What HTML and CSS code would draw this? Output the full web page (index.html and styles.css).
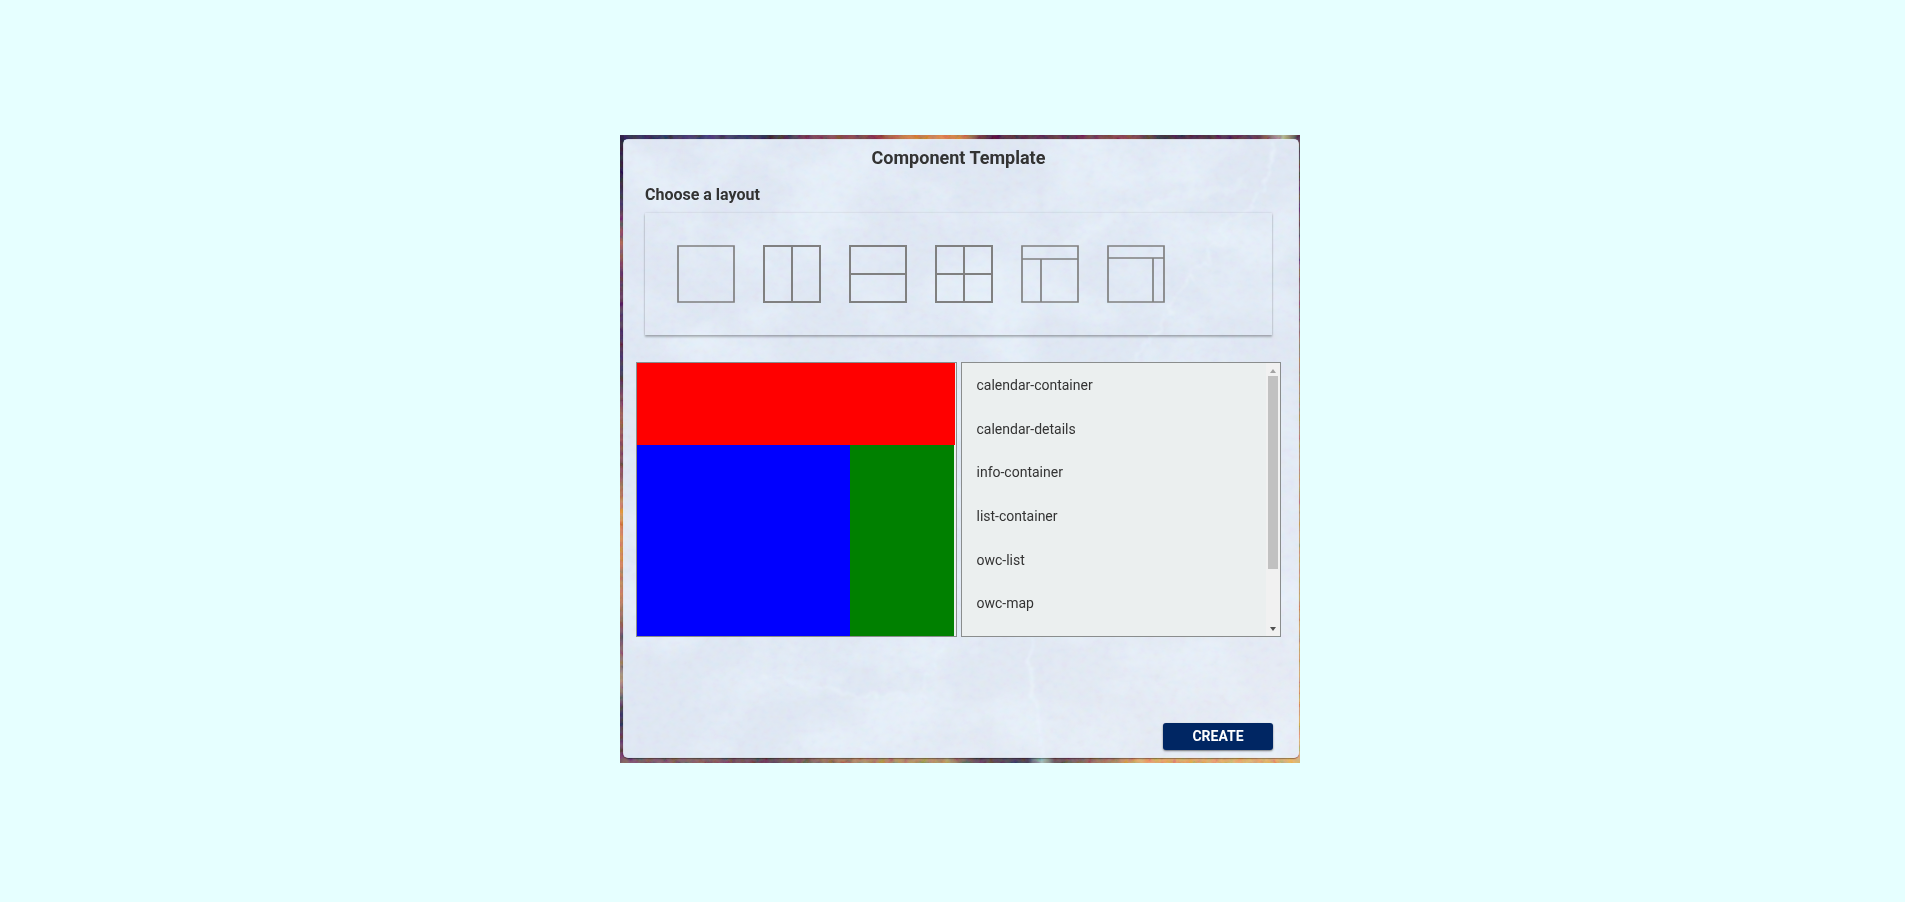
FILE: index.html
```
<!DOCTYPE html>
<html lang="en">
<head>
<meta charset="utf-8">
<title>Component Template</title>
<link rel="stylesheet" href="styles.css">
</head>
<body>
<main class="stage">
  <svg class="backdrop" viewBox="0 0 680 629" preserveAspectRatio="none" aria-hidden="true">
    <defs>
      <linearGradient id="top" x1="0" x2="1" y1="0" y2="0">
        <stop offset="0" stop-color="#17103c"/><stop offset=".15" stop-color="#33246b"/>
        <stop offset=".22" stop-color="#171238"/><stop offset=".3" stop-color="#843a4c"/>
        <stop offset=".37" stop-color="#782530"/><stop offset=".42" stop-color="#d0703c"/>
        <stop offset=".5" stop-color="#e07c3c"/><stop offset=".54" stop-color="#48142f"/>
        <stop offset=".66" stop-color="#541a38"/><stop offset=".75" stop-color="#833d3d"/>
        <stop offset=".8" stop-color="#28102f"/><stop offset=".94" stop-color="#552742"/>
        <stop offset=".975" stop-color="#b6bd9b"/><stop offset="1" stop-color="#39202f"/>
      </linearGradient>
      <linearGradient id="left" x1="0" x2="0" y1="0" y2="1">
        <stop offset="0" stop-color="#100c24"/><stop offset=".07" stop-color="#17102e"/>
        <stop offset=".11" stop-color="#351e58"/><stop offset=".17" stop-color="#a95350"/>
        <stop offset=".22" stop-color="#5c2456"/><stop offset=".38" stop-color="#33204f"/>
        <stop offset=".45" stop-color="#a65547"/><stop offset=".52" stop-color="#793b50"/>
        <stop offset=".6" stop-color="#e58a4e"/><stop offset=".74" stop-color="#c8774d"/>
        <stop offset=".8" stop-color="#6b4058"/><stop offset=".87" stop-color="#b09478"/>
        <stop offset=".92" stop-color="#281a4c"/><stop offset="1" stop-color="#73485a"/>
      </linearGradient>
      <linearGradient id="bottom" x1="0" x2="1" y1="0" y2="0">
        <stop offset="0" stop-color="#704658"/><stop offset=".12" stop-color="#805459"/>
        <stop offset=".22" stop-color="#553547"/><stop offset=".34" stop-color="#b17b57"/>
        <stop offset=".48" stop-color="#b7905e"/><stop offset=".52" stop-color="#5a3c4d"/>
        <stop offset=".6" stop-color="#372b46"/><stop offset=".62" stop-color="#a3cfc0"/>
        <stop offset=".64" stop-color="#5e4150"/><stop offset=".72" stop-color="#a56d58"/>
        <stop offset=".76" stop-color="#eaa45b"/><stop offset="1" stop-color="#efb469"/>
      </linearGradient>
      <linearGradient id="right" x1="0" x2="0" y1="0" y2="1">
        <stop offset="0" stop-color="#443043"/><stop offset=".25" stop-color="#8d6677"/>
        <stop offset=".4" stop-color="#b38d75"/><stop offset="1" stop-color="#efb56c"/>
      </linearGradient>
      <linearGradient id="ground" x1="0" x2="1" y1="0" y2="1">
        <stop offset="0" stop-color="#8189b0"/><stop offset=".3" stop-color="#858ab4"/>
        <stop offset=".6" stop-color="#828cb2"/><stop offset="1" stop-color="#cbb4bb"/>
      </linearGradient>
      <filter id="grain" x="0" y="0" width="100%" height="100%">
        <feTurbulence type="fractalNoise" baseFrequency=".12 .15" numOctaves="4" seed="7"/>
        <feColorMatrix values="1.6 0 0 0 -.4  0 1.6 0 0 -.4  0 0 1.6 0 -.4  0 0 0 0 .2"/>
      </filter>
      <filter id="clouds" x="0" y="0" width="100%" height="100%">
        <feTurbulence type="fractalNoise" baseFrequency=".012 .016" numOctaves="5" seed="12"/>
        <feColorMatrix values="0 0 0 0 .75  0 0 0 0 .94  0 0 0 0 1  3 0 0 0 -1.2"/>
      </filter>
      <filter id="fray" x="-10%" y="-10%" width="120%" height="120%">
        <feTurbulence type="fractalNoise" baseFrequency=".06" numOctaves="3" seed="3"/>
        <feDisplacementMap in="SourceGraphic" scale="18"/>
        <feGaussianBlur stdDeviation=".8"/>
      </filter>
    </defs>
    <rect width="680" height="629" fill="url(#ground)"/>
    <rect width="680" height="629" filter="url(#clouds)" opacity=".6"/>
    <g fill="none" stroke="#e6ffff" stroke-linecap="round" opacity=".6" filter="url(#fray)">
      <path d="M655 10 644 55 615 85 588 122 562 153 535 198 510 240" stroke-width="3"/>
      <path d="M625 50 560 62 490 82 450 110 458 150" stroke-width="9" opacity=".5"/>
      <path d="M407 500 410 540 420 590 425 629" stroke-width="4"/>
      <path d="M140 540 195 555 245 562 300 565 330 500 370 480" stroke-width="2"/>
    </g>
    <rect width="680" height="5" fill="url(#top)"/>
    <rect y="623" width="680" height="6" fill="url(#bottom)"/>
    <rect width="4" height="629" fill="url(#left)"/>
    <rect x="678" width="2" height="629" fill="url(#right)"/>
    <rect width="680" height="629" filter="url(#grain)"/>
  </svg>

  <form class="dialog">
    <h1 class="title">Component Template</h1>
    <section class="chooser">
      <h2 class="subtitle">Choose a layout</h2>
      <div class="layouts">
        <button type="button" class="layout" aria-label="Single"><svg viewBox="0 0 58 58"><path d="M1 1h56v56H1z"/></svg></button>
        <button type="button" class="layout bold" aria-label="Two columns"><svg viewBox="0 0 58 58"><path d="M1 1h56v56H1zM29 1v56"/></svg></button>
        <button type="button" class="layout bold" aria-label="Two rows"><svg viewBox="0 0 58 58"><path d="M1 1h56v56H1zM1 29h56"/></svg></button>
        <button type="button" class="layout bold" aria-label="Grid"><svg viewBox="0 0 58 58"><path d="M1 1h56v56H1zM29 1v56M1 29h56"/></svg></button>
        <button type="button" class="layout" aria-label="Header and left sidebar"><svg viewBox="0 0 58 58"><path d="M1 1h56v56H1zM1 14h56M20 14v43"/></svg></button>
        <button type="button" class="layout" aria-label="Header and right sidebar"><svg viewBox="0 0 58 58"><path d="M1 1h56v56H1zM1 13h56M46 13v44"/></svg></button>
      </div>
    </section>

    <div class="panes">
      <div class="preview">
        <div class="area red"></div>
        <div class="area blue"></div>
        <div class="area green"></div>
      </div>
      <div class="picker">
        <ul class="components">
          <li>calendar-container</li>
          <li>calendar-details</li>
          <li>info-container</li>
          <li>list-container</li>
          <li>owc-list</li>
          <li>owc-map</li>
        </ul>
        <div class="scrollbar" aria-hidden="true">
          <svg class="arrow" viewBox="0 0 12 12"><path d="M3 9 6 5l3 4z" fill="#a3a3a3"/></svg>
          <div class="track"><div class="thumb"></div></div>
          <svg class="arrow" viewBox="0 0 12 12"><path d="M3 4h6L6 8z" fill="#505050"/></svg>
        </div>
      </div>
    </div>

    <div class="actions"><button type="submit" class="create">CREATE</button></div>
  </form>
</main>
</body>
</html>
```
FILE: styles.css
```
* { box-sizing: border-box; }

body {
  margin: 0;
  min-height: 100vh;
  padding: 135px 16px 0 31px;
  background: #e6ffff;
  color: #333;
  font-family: Roboto, "Liberation Sans", sans-serif;
}

.stage {
  position: relative;
  max-width: 680px;
  margin: 0 auto;
  padding: 4px 1px 5px 3px;
}

.backdrop {
  position: absolute;
  inset: 0;
  width: 100%;
  height: 100%;
}

.dialog {
  position: relative;
  padding: 0 18px 8px 13px;
  border-radius: 5px;
  background: rgba(236, 243, 253, 0.87);
  box-shadow: 0 1px 1px rgba(0, 0, 0, 0.35);
}

.title {
  margin: 0 9px;
  padding-top: 7px;
  font-size: 18px;
  line-height: 24px;
  font-weight: 700;
  text-align: center;
}

.chooser { margin: 0 9px; }

.subtitle {
  margin: 0;
  padding: 14px 0 7px;
  font-size: 16px;
  line-height: 22px;
  font-weight: 700;
}

.layouts {
  display: flex;
  flex-wrap: wrap;
  gap: 28px;
  padding: 32px;
  box-shadow: 0 2px 2px rgba(0, 0, 0, 0.25), 0 0 2px rgba(0, 0, 0, 0.15);
}

.layout {
  width: 58px;
  height: 58px;
  padding: 0;
  border: 0;
  background: none;
}

.layout svg {
  display: block;
  width: 58px;
  height: 58px;
  fill: none;
  stroke: #808080;
  stroke-width: 1.7;
}

.layout.bold svg { stroke-width: 2; }

.panes {
  display: grid;
  grid-template-columns: 1fr 1fr;
  gap: 4px;
  height: 275px;
  margin-top: 27px;
}

.preview,
.picker {
  border: 1px solid #8a8d8d;
  background: #ebefef;
}

.preview {
  display: grid;
  grid-template-columns: 213fr 106fr;
  grid-template-rows: 82fr 191fr;
}

.red { grid-column: 1 / 3; background: red; }
.blue { background: blue; }
.green { margin-right: 1px; background: green; }

.picker {
  display: flex;
  overflow: hidden;
}

.components {
  display: grid;
  grid-auto-rows: 16%;
  align-items: center;
  flex: 1;
  margin: 0;
  padding: 0 0 0 15px;
  list-style: none;
  font-size: 14px;
  line-height: 20px;
}

.scrollbar {
  display: flex;
  flex-direction: column;
  width: 14px;
  padding: 1px;
  background: #f1f1f1;
}

.arrow {
  width: 12px;
  height: 12px;
}

.track { flex: 1; }

.thumb {
  width: 10px;
  height: 78%;
  margin-left: 1px;
  background: #c1c1c1;
}

.actions {
  display: flex;
  justify-content: flex-end;
  margin: 86px 8px 0;
}

.create {
  width: 110px;
  height: 27px;
  padding: 0;
  border: 0;
  border-radius: 3px;
  background: #002663;
  box-shadow: 0 1px 2px rgba(0, 0, 0, 0.5);
  color: #fff;
  font: 700 14px/27px Roboto, "Liberation Sans", sans-serif;
}
```
